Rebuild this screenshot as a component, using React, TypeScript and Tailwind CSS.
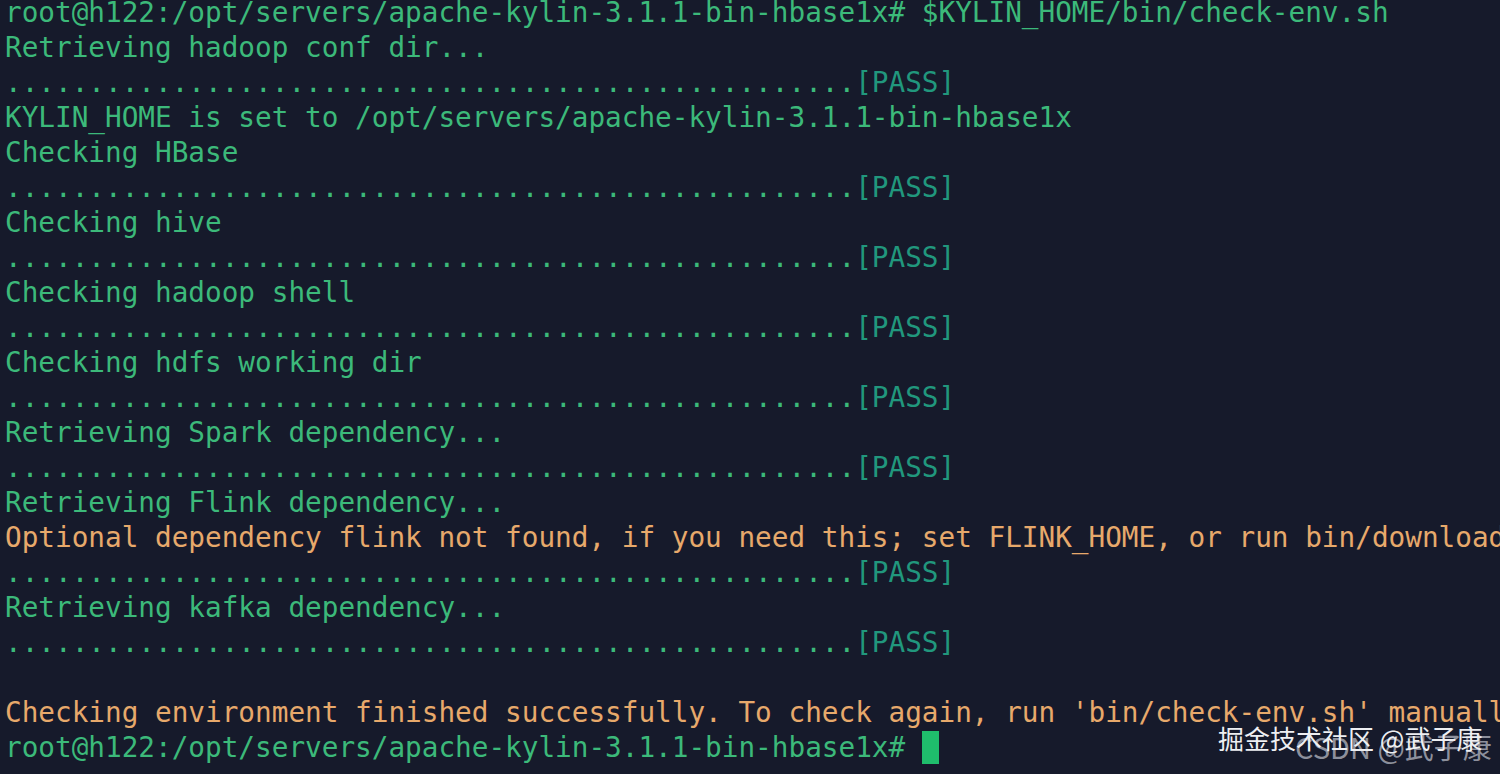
import React from 'react';

type Line = { text: string; tone?: 'green' | 'orange' | 'pass' };

const DOTS = '.'.repeat(51);
const PROMPT = 'root@h122:/opt/servers/apache-kylin-3.1.1-bin-hbase1x#';

const lines: (Line | 'pass' | 'blank')[] = [
  { text: `${PROMPT} $KYLIN_HOME/bin/check-env.sh` },
  { text: 'Retrieving hadoop conf dir...' },
  'pass',
  { text: 'KYLIN_HOME is set to /opt/servers/apache-kylin-3.1.1-bin-hbase1x' },
  { text: 'Checking HBase' },
  'pass',
  { text: 'Checking hive' },
  'pass',
  { text: 'Checking hadoop shell' },
  'pass',
  { text: 'Checking hdfs working dir' },
  'pass',
  { text: 'Retrieving Spark dependency...' },
  'pass',
  { text: 'Retrieving Flink dependency...' },
  {
    text: 'Optional dependency flink not found, if you need this; set FLINK_HOME, or run bin/download-flink.sh',
    tone: 'orange',
  },
  'pass',
  { text: 'Retrieving kafka dependency...' },
  'pass',
  'blank',
  {
    text: "Checking environment finished successfully. To check again, run 'bin/check-env.sh' manually.",
    tone: 'orange',
  },
];

export default function App() {
  return (
    <div className="relative w-[1500px] h-[774px] overflow-hidden bg-[#161a2b]">
      <div
        className="-mt-[5px] pl-[5px] text-[27.7px] leading-[35px] whitespace-pre text-[#3cb97a]"
        style={{ fontFamily: '"DejaVu Sans Mono", "Liberation Mono", monospace' }}
      >
        {lines.map((l, i) => {
          if (l === 'blank') return <div key={i} className="h-[35px]" />;
          if (l === 'pass')
            return (
              <div key={i}>
                {DOTS}
                <span className="text-[#21977d]">[PASS]</span>
              </div>
            );
          return (
            <div key={i} className={l.tone === 'orange' ? 'text-[#e7a96b]' : ''}>
              {l.text}
            </div>
          );
        })}
        <div className="flex items-center">
          <span>{PROMPT} </span>
          <span className="inline-block w-[17px] h-[33px] bg-[#1fbd6c]" />
        </div>
      </div>

      {/* watermarks */}
      <div
        className="absolute left-[1295px] top-[728px] text-[29px] leading-[36px] text-[#c4c7d0]/70 whitespace-nowrap"
        style={{ fontFamily: '"Noto Sans CJK SC", sans-serif' }}
      >
        CSDN @武子康
      </div>
      <div
        className="absolute left-[1218px] top-[721px] text-[26px] leading-[34px] text-[#eeeff2] whitespace-nowrap"
        style={{ fontFamily: '"Noto Sans CJK SC", sans-serif' }}
      >
        掘金技术社区 @武子康
      </div>
    </div>
  );
}
